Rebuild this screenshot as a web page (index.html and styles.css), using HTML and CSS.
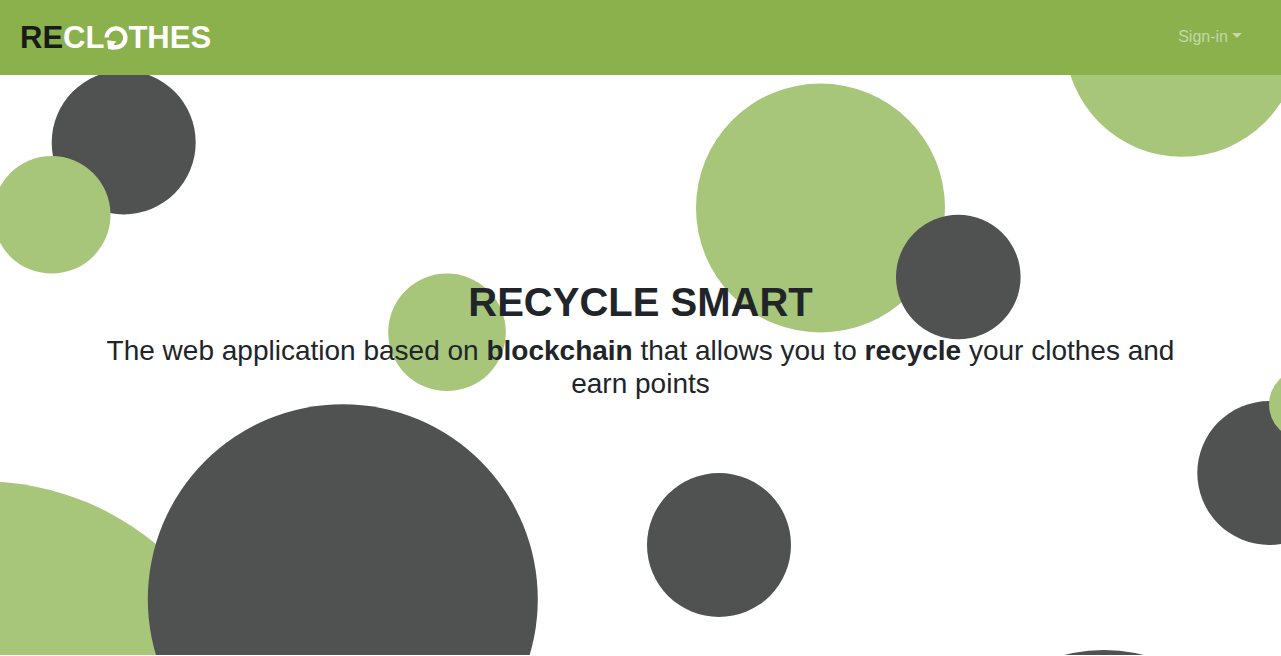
FILE: index.html
```html
<!DOCTYPE html>
<html lang="en">
<head>
  <meta charset="utf-8">
  <meta name="viewport" content="width=device-width, initial-scale=1">
  <title>Reclothes</title>
  <link rel="stylesheet" href="styles.css">
</head>
<body>
  <header class="navbar">
    <a class="brand" href="#" aria-label="Reclothes"><span class="brand-dark">RE</span><span>CL</span><svg class="brand-o" viewBox="0 0 24 24" aria-hidden="true"><path d="M2.6 11.5A9.4 9.4 0 1 1 12 21.2H8" fill="none" stroke="currentColor" stroke-width="4.4"/><path d="M3.2 14.2L12.4 15.6L10 18V23.4H7L4 23Z" fill="currentColor"/></svg><span>THES</span></a>
    <button class="signin" type="button" aria-haspopup="true">Sign-in</button>
  </header>
  <main class="hero">
    <svg class="bubbles" viewBox="0 0 1281 580" preserveAspectRatio="xMidYMid slice" aria-hidden="true">
      <g class="bubble-dark">
        <circle cx="123.7" cy="67.5" r="72"/>
        <circle cx="719" cy="470" r="72"/>
        <circle cx="1269.3" cy="398" r="72"/>
        <circle cx="1104" cy="735" r="160"/>
      </g>
      <g class="bubble-green">
        <circle cx="51.7" cy="139.8" r="58.8"/>
        <circle cx="1182" cy="-35.2" r="117"/>
        <circle cx="820.5" cy="133" r="124.5"/>
        <circle cx="447" cy="257.3" r="58.8"/>
        <circle cx="1304" cy="329.5" r="35"/>
        <circle cx="-17" cy="676.5" r="270"/>
      </g>
      <g class="bubble-dark">
        <circle cx="958.3" cy="202" r="62.3"/>
        <circle cx="342.8" cy="524.2" r="195"/>
      </g>
    </svg>
    <div class="hero-text">
      <h1>RECYCLE SMART</h1>
      <p>The web application based on <strong>blockchain</strong> that allows you to <strong>recycle</strong> your clothes and earn points</p>
    </div>
  </main>
</body>
</html>
```
FILE: styles.css
```css
* {
  box-sizing: border-box;
}

body {
  margin: 0;
  background: #fff;
  color: #212529;
  font-family: "Liberation Sans", Arial, sans-serif;
}

.navbar {
  display: flex;
  align-items: center;
  justify-content: space-between;
  min-height: 75px;
  padding: 0 39px 2px 20px;
  background: #8ab14c;
}

.brand {
  display: flex;
  align-items: center;
  padding-top: 2px;
  color: #fff;
  font: 700 31px/36px "Liberation Sans", Arial, sans-serif;
  text-decoration: none;
}

.brand-dark {
  color: #1a1a1a;
}

.brand-o {
  width: 24px;
  height: 24px;
}

.signin {
  display: flex;
  align-items: center;
  gap: 4px;
  padding: 0;
  border: 0;
  background: none;
  color: rgba(255, 255, 255, 0.5);
  font: 16px/24px "Liberation Sans", Arial, sans-serif;
  cursor: pointer;
}

.signin::after {
  content: "";
  margin-bottom: 2px;
  border-top: 5px solid;
  border-right: 5px solid transparent;
  border-left: 5px solid transparent;
}

.hero {
  position: relative;
  display: flex;
  align-items: center;
  justify-content: center;
  min-height: calc(100vh - 76px);
  padding: 0 16px 52px;
  overflow: hidden;
}

.bubbles {
  position: absolute;
  inset: 0;
  width: 100%;
  height: 100%;
}

.bubble-dark {
  fill: #505251;
}

.bubble-green {
  fill: #a7c67a;
}

.hero-text {
  position: relative;
  max-width: 1110px;
  text-align: center;
}

.hero-text h1 {
  margin: 0 0 8px;
  font-size: 40px;
  line-height: 48px;
}

.hero-text p {
  margin: 0;
  font-size: 28px;
  line-height: 33px;
}
```
